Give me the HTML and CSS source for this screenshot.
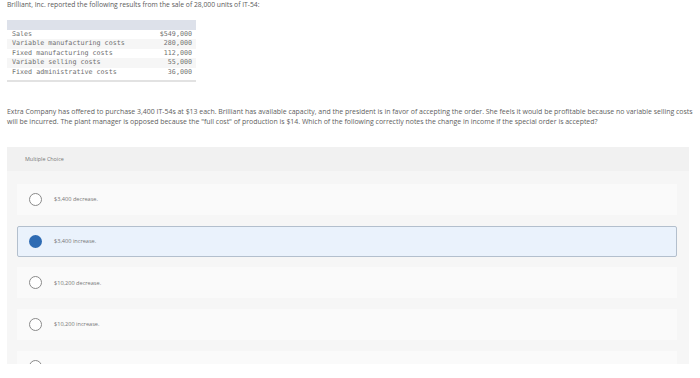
FILE: index.html
```html
<!DOCTYPE html>
<html>
<head>
<meta charset="utf-8">
<link rel="stylesheet" href="styles.css">
</head>
<body>
<div class="page">
  <p class="title">Brilliant, Inc. reported the following results from the sale of 28,000 units of IT-54:</p>
  <div class="fin">
    <div class="fin-head"></div>
    <div class="fin-body">
      <div class="fin-row"><span>Sales</span><span>$549,000</span></div>
      <div class="fin-row alt"><span>Variable manufacturing costs</span><span>280,000</span></div>
      <div class="fin-row"><span>Fixed manufacturing costs</span><span>112,000</span></div>
      <div class="fin-row alt"><span>Variable selling costs</span><span>55,000</span></div>
      <div class="fin-row"><span>Fixed administrative costs</span><span>36,000</span></div>
    </div>
  </div>
  <p class="question">Extra Company has offered to purchase 3,400 IT-54s at $13 each. Brilliant has available capacity, and the president is in favor of accepting the order. She feels it would be profitable because no variable selling costs will be incurred. The plant manager is opposed because the "full cost" of production is $14. Which of the following correctly notes the change in income if the special order is accepted?</p>
  <div class="mc">
    <div class="mc-head">Multiple Choice</div>
    <div class="mc-body">
      <div class="opt"><span class="radio"></span><span class="opt-text">$3,400 decrease.</span></div>
      <div class="opt selected"><span class="radio"></span><span class="opt-text">$3,400 increase.</span></div>
      <div class="opt"><span class="radio"></span><span class="opt-text">$10,200 decrease.</span></div>
      <div class="opt"><span class="radio"></span><span class="opt-text">$10,200 increase.</span></div>
      <div class="opt"><span class="radio"></span><span class="opt-text">No change in income.</span></div>
    </div>
  </div>
</div>
</body>
</html>
```
FILE: styles.css
```css
html, body {
  margin: 0;
  padding: 0;
  background: #ffffff;
}
.page {
  padding: 0 7px;
  font-family: "Open Sans", Lato, sans-serif;
  font-weight: 400;
  color: #666;
}
.title {
  margin: 0;
  font-size: 6.75px;
  line-height: 9px;
  color: #5a5a5a;
}
.fin {
  width: 189px;
  margin-top: 11px;
}
.fin-head {
  height: 9.5px;
  background: #dde1ea;
}
.fin-body {
  padding: 0 0 3px 0;
  border-bottom: 2px solid #e2e2e2;
  font-family: "DejaVu Sans Mono", "Liberation Mono", monospace;
  font-weight: 400;
  font-size: 6.7px;
  color: #707070;
}
.fin-row {
  display: flex;
  justify-content: space-between;
  height: 9.6px;
  line-height: 9.6px;
  padding: 0 4px 0 5px;
}
.fin-row.alt {
  background: #f6f6f6;
}
.question {
  margin: 25px 0 0 0;
  font-size: 6.95px;
  line-height: 9.2px;
  color: #5e5e5e;
}
.mc {
  margin: 21px 4px 0 0;
  height: 217px;
  overflow: hidden;
  background: #f6f6f6;
}
.mc-head {
  height: 24px;
  line-height: 24px;
  padding-left: 18px;
  background: #f1f1f1;
  font-size: 5.4px;
  color: #777;
}
.mc-body {
  display: flex;
  flex-direction: column;
  gap: 10.7px;
  padding: 13px 12px 0 10px;
}
.opt {
  display: flex;
  align-items: center;
  height: 31px;
  box-sizing: border-box;
  background: #fafafa;
  padding-left: 12px;
}
.opt.selected {
  background: #eaf2fc;
  border: 1px solid #b3bfcd;
  border-radius: 2px;
  padding-left: 11px;
}
.radio {
  width: 13px;
  height: 13px;
  box-sizing: border-box;
  border: 1px solid #8a8a8a;
  border-radius: 50%;
  background: #fff;
  flex: none;
}
.opt.selected .radio {
  border: none;
  background: #2e6bb3;
}
.opt-text {
  margin-left: 12px;
  font-size: 5.6px;
  color: #777;
}
```
